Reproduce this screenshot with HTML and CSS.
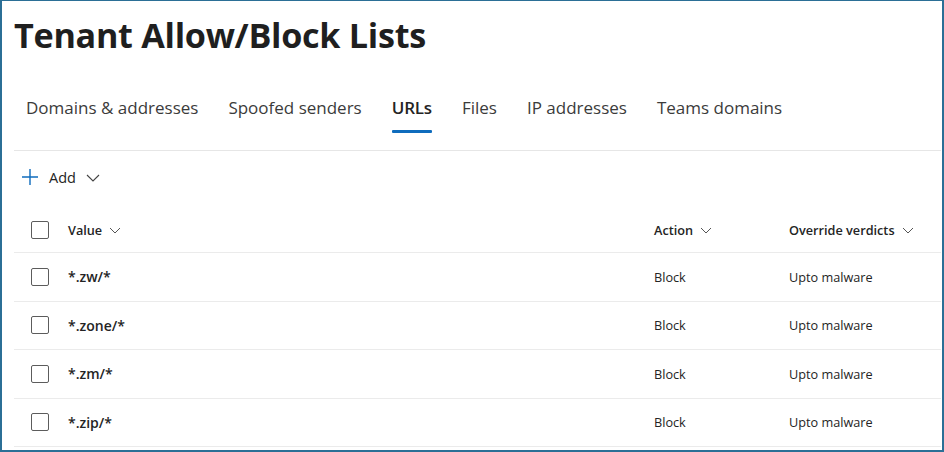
FILE: index.html
```html
<!DOCTYPE html>
<html lang="en">
<head>
<meta charset="utf-8">
<title>Tenant Allow/Block Lists</title>
<link rel="stylesheet" href="styles.css">
</head>
<body>
<div class="frame">
  <h1 class="title">Tenant Allow/Block Lists</h1>

  <nav class="tabs">
    <a class="tab">Domains &amp; addresses</a>
    <a class="tab">Spoofed senders</a>
    <a class="tab active">URLs</a>
    <a class="tab">Files</a>
    <a class="tab">IP addresses</a>
    <a class="tab">Teams domains</a>
  </nav>

  <div class="toolbar">
    <button class="add-btn">
      <svg class="plus" width="18" height="18" viewBox="0 0 18 18"><path d="M9 1v16M1 9h16" stroke="#0f6cbd" stroke-width="1.4" fill="none"/></svg>
      <span>Add</span>
      <svg class="chev" width="14" height="8" viewBox="0 0 14 8"><path d="M1 1l6 6 6-6" stroke="#444" stroke-width="1.1" fill="none"/></svg>
    </button>
  </div>

  <div class="grid">
    <div class="row head">
      <span class="cb"></span>
      <span class="cell value">Value <svg class="chev sm" width="12" height="7" viewBox="0 0 12 7"><path d="M1 1l5 5 5-5" stroke="#555" stroke-width="1" fill="none"/></svg></span>
      <span class="cell action">Action <svg class="chev sm" width="12" height="7" viewBox="0 0 12 7"><path d="M1 1l5 5 5-5" stroke="#555" stroke-width="1" fill="none"/></svg></span>
      <span class="cell verdict">Override verdicts <svg class="chev sm" width="12" height="7" viewBox="0 0 12 7"><path d="M1 1l5 5 5-5" stroke="#555" stroke-width="1" fill="none"/></svg></span>
    </div>
    <div class="row">
      <span class="cb"></span>
      <span class="cell value">*.zw/*</span>
      <span class="cell action">Block</span>
      <span class="cell verdict">Upto malware</span>
    </div>
    <div class="row">
      <span class="cb"></span>
      <span class="cell value">*.zone/*</span>
      <span class="cell action">Block</span>
      <span class="cell verdict">Upto malware</span>
    </div>
    <div class="row">
      <span class="cb"></span>
      <span class="cell value">*.zm/*</span>
      <span class="cell action">Block</span>
      <span class="cell verdict">Upto malware</span>
    </div>
    <div class="row">
      <span class="cb"></span>
      <span class="cell value">*.zip/*</span>
      <span class="cell action">Block</span>
      <span class="cell verdict">Upto malware</span>
    </div>
  </div>
</div>
</body>
</html>
```
FILE: styles.css
```css
* { box-sizing: border-box; }

html, body {
  margin: 0;
  padding: 0;
  background: #fff;
}

body {
  font-family: "Open Sans", "Noto Sans", sans-serif;
  color: #242424;
}

.frame {
  width: 944px;
  height: 452px;
  border: 2px solid #2b6f96;
  border-top-width: 1px;
  padding: 0 1px 0 12px;
  overflow: hidden;
}

.title {
  margin: 0;
  padding-top: 11px;
  height: 66px;
  font-size: 34.2px;
  font-weight: 700;
  letter-spacing: -0.3px;
  line-height: 46px;
  color: #1f1f1f;
}

.tabs {
  display: flex;
  gap: 30px;
  padding: 0 0 0 12px;
  height: 84px;
  border-bottom: 1px solid #e6e6e6;
}

.tab {
  position: relative;
  padding-top: 29px;
  font-size: 17px;
  line-height: 24px;
  color: #3b3b3b;
  cursor: pointer;
}

.tab.active {
  font-weight: 600;
  color: #242424;
  letter-spacing: -0.2px;
}

.tab.active::after {
  content: "";
  position: absolute;
  left: 0;
  right: 0;
  top: 63px;
  height: 3px;
  border-radius: 1px;
  background: #0f6cbd;
}

.toolbar {
  height: 52px;
  display: flex;
  align-items: center;
  padding-left: 7px;
}

.add-btn {
  display: flex;
  align-items: center;
  gap: 0;
  border: 0;
  background: none;
  padding: 0;
  font-family: inherit;
  font-size: 14.5px;
  color: #242424;
  cursor: pointer;
}

.add-btn .plus { margin-right: 10px; }
.add-btn .chev { margin-left: 10px; margin-top: 1px; }

.row {
  display: grid;
  grid-template-columns: 54px 586px 135px 1fr;
  align-items: center;
  height: 48.5px;
  border-bottom: 1px solid #ebebeb;
  font-size: 12.7px;
  color: #242424;
}

.row.head {
  height: 50px;
  padding-top: 4px;
  font-weight: 600;
}

.cb {
  width: 18px;
  height: 18px;
  margin-left: 17px;
  border: 1px solid #5c5c5c;
  border-radius: 2px;
}

.cell {
  display: flex;
  align-items: center;
  gap: 7px;
  white-space: nowrap;
}

.row:not(.head) .value {
  font-size: 14px;
  font-weight: 600;
}

.chev.sm { margin-top: 1px; }
```
